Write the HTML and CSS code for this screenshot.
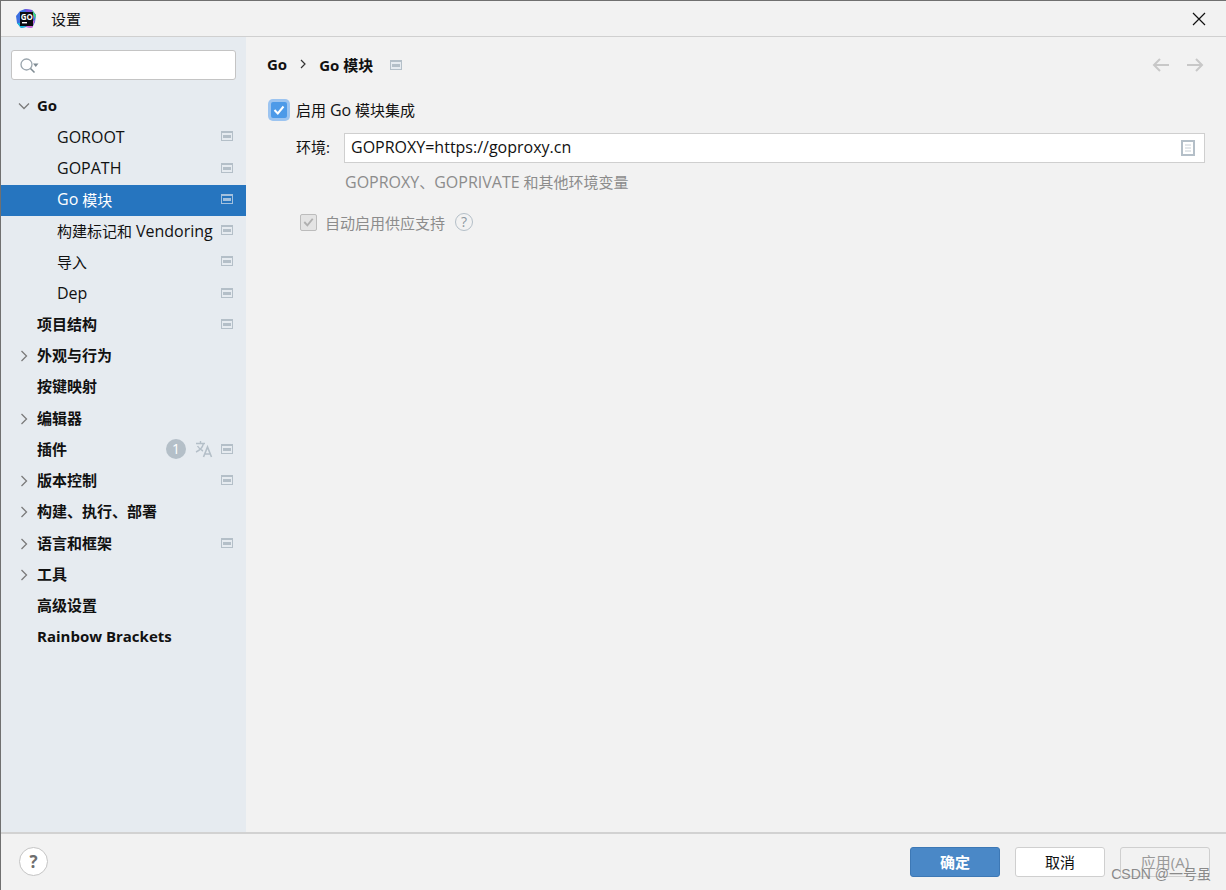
FILE: index.html
```html
<!DOCTYPE html>
<html lang="zh-CN">
  <head>
    <meta charset="UTF-8" />
    <title>设置</title>
    <link rel="stylesheet" href="styles.css">
  </head>
  <body>
    <svg class="defs" width="0" height="0">
      <symbol id="page" viewBox="0 0 12 10">
        <rect class="page-line" x="0" y="0" width="12" height="10"/>
        <rect class="page-bg" x="1" y="2" width="10" height="7"/>
        <rect class="page-line" x="2" y="4" width="8" height="3"/>
      </symbol>
    </svg>
    <div class="window">
      <header class="titlebar">
        <svg class="logo" width="22" height="22" viewBox="0 0 22 22">
          <path d="M5 3 L10 1 L17 2 L21 7 L20 14 L17 20 L11 19 L6 20 L2 15 L1 8 Z" fill="#3b6fe0"/>
          <path d="M10 1 L17 2 L21 7 L19 10 L12 6 Z" fill="#7c4ddb"/>
          <path d="M17 2 L21 7 L20 11 L18 6 Z" fill="#3ddc84"/>
          <path d="M20 12 L17 20 L11 19 L14 15 Z" fill="#d966d6"/>
          <path d="M2 15 L6 20 L11 19 L7 15 Z" fill="#19b5d8"/>
          <rect x="5" y="4" width="13" height="14" fill="#0b0b10"/>
          <rect x="7" y="14" width="5" height="1.4" fill="#fff"/>
          <text x="5.8" y="11.5" class="logo-text">GO</text>
        </svg>
        <span class="title">设置</span>
        <svg class="close" width="14" height="14" viewBox="0 0 14 14">
          <path d="M1 1 L13 13 M13 1 L1 13" stroke="#111" stroke-width="1.2" fill="none"/>
        </svg>
      </header>

      <div class="main">
        <aside class="sidebar">
          <div class="search">
            <svg width="20" height="18" viewBox="0 0 20 18">
              <circle cx="7.5" cy="7.5" r="5.5" fill="none" stroke="#9aa5ad" stroke-width="1.3"/>
              <path d="M11.5 11.5 L15.5 15.5" stroke="#7f8b93" stroke-width="1.6"/>
              <path d="M14 6.5 H19.5 L16.75 10 Z" fill="#7f8b93"/>
            </svg>
          </div>
          <ul class="tree">
            <li class="row top"><svg class="arrow" width="14" height="14" viewBox="0 0 14 14"><path d="M2 4.5 L7 9.5 L12 4.5" fill="none" stroke="#7b7b7b" stroke-width="1.3"/></svg>Go</li>
            <li class="row child"><span class="en">GOROOT</span><svg class="page"><use href="#page"/></svg></li>
            <li class="row child"><span class="en">GOPATH</span><svg class="page"><use href="#page"/></svg></li>
            <li class="row child selected"><span class="en">Go </span>&nbsp;模块<svg class="page"><use href="#page"/></svg></li>
            <li class="row child">构建标记和&nbsp;<span class="en">Vendoring</span><svg class="page"><use href="#page"/></svg></li>
            <li class="row child">导入<svg class="page"><use href="#page"/></svg></li>
            <li class="row child"><span class="en">Dep</span><svg class="page"><use href="#page"/></svg></li>
            <li class="row top">项目结构<svg class="page"><use href="#page"/></svg></li>
            <li class="row top"><svg class="arrow" width="14" height="14" viewBox="0 0 14 14"><path d="M4.5 2 L9.5 7 L4.5 12" fill="none" stroke="#7b7b7b" stroke-width="1.3"/></svg>外观与行为</li>
            <li class="row top">按键映射</li>
            <li class="row top"><svg class="arrow" width="14" height="14" viewBox="0 0 14 14"><path d="M4.5 2 L9.5 7 L4.5 12" fill="none" stroke="#7b7b7b" stroke-width="1.3"/></svg>编辑器</li>
            <li class="row top">插件
              <span class="badge">1</span>
              <svg class="translate" width="18" height="18" viewBox="0 0 18 18">
                <path d="M1 3.5 H10 M5.5 1 V3.5 M8.5 3.5 C7.5 7.5 4.5 10.5 1 12 M2.5 6 C4 8.5 6 10 8 11" fill="none" stroke="#b4bfc8" stroke-width="1.4"/>
                <path d="M8.5 17 L12.5 7 L16.5 17 M10 14 H15" fill="none" stroke="#b4bfc8" stroke-width="1.6"/>
              </svg>
              <svg class="page"><use href="#page"/></svg>
            </li>
            <li class="row top"><svg class="arrow" width="14" height="14" viewBox="0 0 14 14"><path d="M4.5 2 L9.5 7 L4.5 12" fill="none" stroke="#7b7b7b" stroke-width="1.3"/></svg>版本控制<svg class="page"><use href="#page"/></svg></li>
            <li class="row top"><svg class="arrow" width="14" height="14" viewBox="0 0 14 14"><path d="M4.5 2 L9.5 7 L4.5 12" fill="none" stroke="#7b7b7b" stroke-width="1.3"/></svg>构建、执行、部署</li>
            <li class="row top"><svg class="arrow" width="14" height="14" viewBox="0 0 14 14"><path d="M4.5 2 L9.5 7 L4.5 12" fill="none" stroke="#7b7b7b" stroke-width="1.3"/></svg>语言和框架<svg class="page"><use href="#page"/></svg></li>
            <li class="row top"><svg class="arrow" width="14" height="14" viewBox="0 0 14 14"><path d="M4.5 2 L9.5 7 L4.5 12" fill="none" stroke="#7b7b7b" stroke-width="1.3"/></svg>工具</li>
            <li class="row top">高级设置</li>
            <li class="row top">Rainbow Brackets</li>
          </ul>
        </aside>

        <section class="content">
          <div class="crumbs">
            <b>Go</b>
            <svg width="8" height="10" viewBox="0 0 8 10"><path d="M2 1 L6 5 L2 9" fill="none" stroke="#333" stroke-width="1.2"/></svg>
            <b>Go 模块</b>
            <svg class="page crumb-page"><use href="#page"/></svg>
            <div class="nav">
              <svg width="18" height="14" viewBox="0 0 18 14"><path d="M17 7 H2 M8 1 L2 7 L8 13" fill="none" stroke="#c8c8c8" stroke-width="2"/></svg>
              <svg width="18" height="14" viewBox="0 0 18 14"><path d="M1 7 H16 M10 1 L16 7 L10 13" fill="none" stroke="#c8c8c8" stroke-width="2"/></svg>
            </div>
          </div>

          <label class="check-row">
            <span class="checkbox focused">
              <svg width="16" height="16" viewBox="0 0 16 16"><path d="M3.5 8 L6.8 11.5 L12.5 4.5" fill="none" stroke="#fff" stroke-width="2"/></svg>
            </span>
            <span>启用 <span class="en">Go</span> 模块集成</span>
          </label>

          <div class="env-row">
            <span class="env-label">环境:</span>
            <div class="env-input">
              GOPROXY=https://goproxy.cn
              <svg class="env-icon" width="14" height="16" viewBox="0 0 14 16">
                <rect x="1" y="1" width="12" height="14" fill="#fff" stroke="#b4bfc8" stroke-width="2"/>
                <path d="M4 5 H10 M4 8 H10 M4 11 H10" stroke="#c6ced4" stroke-width="1"/>
              </svg>
            </div>
          </div>
          <p class="hint"><span class="en">GOPROXY</span>、<span class="en">GOPRIVATE</span> 和其他环境变量</p>

          <div class="vendor-row">
            <span class="checkbox disabled">
              <svg width="16" height="16" viewBox="0 0 16 16"><path d="M3.5 8 L6.8 11.5 L12.5 4.5" fill="none" stroke="#b0b0b0" stroke-width="2"/></svg>
            </span>
            自动启用供应支持
            <span class="help-small">?</span>
          </div>
        </section>
      </div>

      <footer class="footer">
        <span class="help">?</span>
        <div class="buttons">
          <button class="btn primary">确定</button>
          <button class="btn">取消</button>
          <button class="btn off">应用(A)</button>
        </div>
      </footer>
    </div>
    <div class="watermark">CSDN @一号虽</div>
  </body>
</html>
```

FILE: styles.css
```css
* {
  box-sizing: border-box;
}
html, body {
  margin: 0;
  height: 100%;
  overflow: hidden;
}
body {
  font-family: "Open Sans", "Noto Sans CJK SC", sans-serif;
  font-size: 15px;
  color: #111;
  background-color: #f2f2f2;
}
.defs {
  position: absolute;
}
.en {
  font-size: 16px;
}
.page-line {
  fill: var(--page-line, #b4bfc8);
}
.page-bg {
  fill: var(--page-bg, #e6ebf0);
}
.window {
  display: flex;
  flex-direction: column;
  height: 890px;
  border-top: 1px solid #707070;
  border-left: 1px solid #707070;
}
.titlebar {
  display: flex;
  align-items: center;
  flex: none;
  height: 36px;
  padding: 0 20px 0 14px;
  border-bottom: 1px solid #d0d0d0;
  background-color: #f2f2f2;
}
.logo-text {
  font-size: 8px;
  font-weight: 700;
  fill: #fff;
}
.title {
  margin-left: 14px;
}
.close {
  margin-left: auto;
}
.main {
  display: flex;
  flex: 1;
  min-height: 0;
}
.sidebar {
  flex: none;
  width: 245px;
  padding-top: 13px;
  background-color: #e6ebf0;
}
.search {
  display: flex;
  align-items: center;
  height: 30px;
  margin: 0 10px;
  padding: 2px 0 0 7px;
  background-color: #fff;
  border: 1px solid #c4c4c4;
  border-radius: 3px;
}
.tree {
  list-style: none;
  margin: 11px 0 0;
  padding: 0;
}
.row {
  position: relative;
  display: flex;
  align-items: center;
  height: 31.25px;
  white-space: nowrap;
}
.top {
  padding-left: 36px;
  padding-bottom: 4px;
  font-weight: 700;
}
.child {
  padding-left: 56px;
  padding-bottom: 2px;
}
.selected {
  --page-line: #a3c1de;
  --page-bg: #2675bf;
  background-color: #2675bf;
  color: #fff;
}
.arrow {
  position: absolute;
  left: 16px;
  top: 8px;
}
.page {
  width: 12px;
  height: 10px;
}
.row .page {
  position: absolute;
  right: 13px;
  top: 9px;
}
.badge {
  position: absolute;
  left: 165px;
  top: 4px;
  width: 20px;
  height: 20px;
  border-radius: 50%;
  background-color: #b4bfc8;
  color: #fff;
  font-size: 14px;
  font-weight: 400;
  line-height: 20px;
  text-align: center;
}
.translate {
  position: absolute;
  left: 194px;
  top: 5px;
}
.content {
  flex: 1;
  padding: 0 21px;
}
.crumbs {
  display: flex;
  align-items: center;
  gap: 12px;
  height: 22px;
  margin-top: 16px;
}
.crumbs b {
  font-weight: 700;
}
.crumb-page {
  margin-left: 5px;
  margin-top: 2px;
}
.nav {
  display: flex;
  gap: 16px;
  margin-left: auto;
  margin-right: 1px;
  margin-top: 2px;
}
.check-row {
  display: flex;
  align-items: center;
  gap: 6px;
  height: 24px;
  margin-top: 23px;
}
.checkbox {
  display: flex;
  flex: none;
  align-items: center;
  justify-content: center;
  width: 16px;
  height: 16px;
  border-radius: 2px;
}
.focused {
  margin: 0 3px 0 4px;
  background-color: #4d9ae8;
  box-shadow: 0 0 0 3px #9cc4f0;
}
.env-row {
  display: flex;
  align-items: center;
  margin-top: 11px;
  padding-left: 29px;
}
.env-label {
  width: 48px;
  flex: none;
  margin-bottom: 4px;
}
.env-input {
  position: relative;
  flex: 1;
  height: 30px;
  padding-left: 6px;
  background-color: #fff;
  border: 1px solid #cfcfcf;
  font-size: 16px;
  line-height: 27px;
}
.env-icon {
  position: absolute;
  right: 9px;
  top: 6px;
}
.hint {
  margin: 8px 0 0 78px;
  height: 22px;
  line-height: 22px;
  color: #8c8c8c;
}
.vendor-row {
  display: flex;
  align-items: center;
  height: 24px;
  margin-top: 17px;
  padding-left: 33px;
  color: #8c8c8c;
}
.disabled {
  width: 17px;
  height: 17px;
  margin-right: 8px;
  background-color: #e4e4e4;
  border: 1px solid #bcbcbc;
}
.help-small {
  width: 18px;
  height: 18px;
  margin-left: 10px;
  border: 1.5px solid #b4bfc8;
  border-radius: 50%;
  color: #8c979f;
  font-size: 14px;
  line-height: 15px;
  text-align: center;
}
.footer {
  display: flex;
  align-items: center;
  flex: none;
  height: 58px;
  padding: 0 16px 1px 18px;
  border-top: 2px solid #d2d2d2;
}
.help {
  width: 29px;
  height: 29px;
  border: 1px solid #c4c4c4;
  border-radius: 50%;
  background-color: #fff;
  color: #6e6e6e;
  font-size: 17px;
  font-weight: 700;
  line-height: 27px;
  text-align: center;
}
.buttons {
  display: flex;
  gap: 15px;
  margin-left: auto;
}
.btn {
  width: 90px;
  height: 30px;
  padding: 0;
  background-color: #fff;
  border: 1px solid #cfcfcf;
  border-radius: 3px;
  color: #111;
  font-family: inherit;
  font-size: 15px;
}
.primary {
  background-color: #4a88c7;
  border-color: #3d78b5;
  color: #fff;
  font-weight: 700;
}
.off {
  background-color: #f2f2f2;
  color: #9a9a9a;
}
.watermark {
  position: absolute;
  right: 15px;
  bottom: 7px;
  color: #8a8a8a;
  font-family: "Liberation Sans", "Noto Sans CJK SC", sans-serif;
  font-size: 14px;
}
```
